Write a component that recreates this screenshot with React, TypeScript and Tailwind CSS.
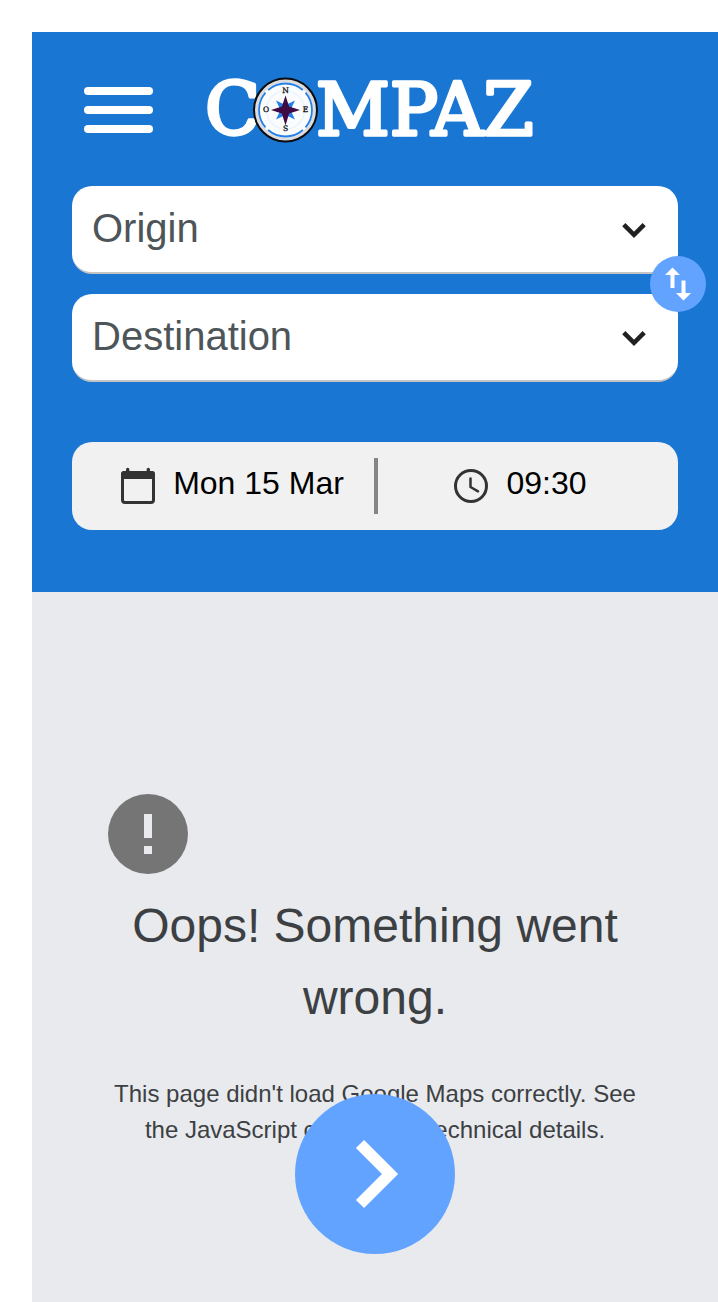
import React from "react";

type FieldProps = { id: string; label: string; options: string[] };

function PlaceField({ id, label, options }: FieldProps) {
  return (
    <div className="grid items-center">
      <select
        id={id}
        aria-label={label}
        defaultValue=""
        className="col-start-1 row-start-1 h-[88px] w-full appearance-none rounded-[20px] border-b-2 border-[#c4c4c4] bg-white pr-20 pb-0.5 pl-5 text-[40px] text-[#4d5559]"
      >
        <option value="">{label}</option>
        {options.map((o) => (
          <option key={o}>{o}</option>
        ))}
      </select>
      <svg
        viewBox="0 0 24 16"
        className="pointer-events-none col-start-1 row-start-1 mr-8 h-4 w-6 justify-self-end"
        fill="none"
        stroke="#212121"
        strokeWidth="4.500"
        aria-hidden="true"
      >
        <path d="M1.800 2.600L12 12.800L22.200 2.600" />
      </svg>
    </div>
  );
}

function Logo() {
  return (
    <svg viewBox="0 -16 342 100" className="h-[100px] w-[342px] shrink-0" role="img" aria-label="Compaz">
      <g
        fill="#fff"
        stroke="#fff"
        strokeWidth="3.500"
        strokeLinejoin="round"
        fontFamily="'DejaVu Serif', serif"
        fontSize="72"
      >
        <text x="1" y="59">C</text>
        <text x="112" y="59">MPAZ</text>
      </g>
      <g transform="translate(48.500 1)">
        <circle cx="33" cy="33" r="31.500" fill="#dcdcde" stroke="#0b0b10" strokeWidth="2" />
        <circle cx="33" cy="33" r="27.500" fill="#fbfcfe" />
        <circle
          cx="33"
          cy="33"
          r="26.500"
          fill="none"
          stroke="#2480e6"
          strokeWidth="1.800"
          pathLength="360"
          strokeDasharray="82 8"
          strokeDashoffset="-49"
        />
        <circle cx="33" cy="33" r="19" fill="none" stroke="#eaf4fc" strokeWidth="1.500" />
        <path
          d="M23.500 23.500L33 28L42.500 23.500L38 33L42.500 42.500L33 38L23.500 42.500L28 33Z"
          fill="#2480e6"
        />
        <path
          d="M33 18.500L36.600 29.400L47.500 33L36.600 36.600L33 48.500L29.400 36.600L18.500 33L29.400 29.400Z"
          fill="#400b42"
        />
        <g fill="#111" fontFamily="'DejaVu Serif', serif" fontSize="7.500" textAnchor="middle" stroke="#111" strokeWidth=".3">
          <text x="33" y="16">N</text>
          <text x="53" y="34.500">E</text>
          <text x="33" y="53.500">S</text>
          <text x="13.500" y="34.500">O</text>
        </g>
      </g>
    </svg>
  );
}

export default function App() {
  return (
    <div className="flex min-h-screen flex-col bg-white pt-8 pl-8 font-['Liberation_Sans',Arial,sans-serif]">
      <header className="bg-[#1976d2] px-10 pt-11 pb-[62px]">
        <div className="flex h-[68px] items-center pl-3">
          <button type="button" aria-label="Menu" className="flex w-[69px] flex-col gap-[11px]">
            <span className="h-2 rounded-full bg-white" />
            <span className="h-2 rounded-full bg-white" />
            <span className="h-2 rounded-full bg-white" />
          </button>
          <a href="#" aria-label="Compaz" className="ml-[51px]">
            <Logo />
          </a>
        </div>

        <form className="mt-[42px]" onSubmit={(e) => e.preventDefault()}>
          <div className="relative flex flex-col gap-5">
            <PlaceField id="origin" label="Origin" options={["Home", "Work"]} />
            <PlaceField id="destination" label="Destination" options={["Home", "Work"]} />
            <button
              type="button"
              aria-label="Swap origin and destination"
              className="absolute top-1/2 -right-7 flex size-14 -translate-y-1/2 items-center justify-center rounded-full bg-[#62a3ff]"
            >
              <svg viewBox="0 0 56 56" className="size-14" fill="#fff" aria-hidden="true">
                <path d="M22.500 11.500L30 19H24.500V32H20.500V19H15ZM31.500 24.500H35.500V37H41L33.500 44.500L26 37H31.500Z" />
              </svg>
            </button>
          </div>

          <div className="mt-[60px] flex h-[88px] items-center rounded-[20px] bg-[#f1f1f1] text-[32px] text-black">
            <button type="button" className="flex flex-1 items-center justify-center gap-[17px] pl-[18px]">
              <svg viewBox="0 0 36 38" className="h-[38px] w-9 shrink-0" aria-hidden="true">
                <rect x="2.500" y="5.500" width="31" height="30" rx="2.500" fill="none" stroke="#333" strokeWidth="3" />
                <path d="M1 12V7Q1 4 4 4H6V2.500Q6 .8 7.700 .8T9.400 2.500V4H26.600V2.500Q26.600 .8 28.300 .8T30 2.500V4H32Q35 4 35 7V12Z" fill="#333" />
              </svg>
              <span className="pb-1.5 whitespace-nowrap">Mon 15 Mar</span>
            </button>
            <span className="h-14 w-1 bg-[#858585]" />
            <button type="button" className="flex flex-1 items-center justify-center gap-[17px] pr-4">
              <svg
                viewBox="0 0 36 36"
                className="size-9 shrink-0"
                fill="none"
                stroke="#333"
                strokeLinecap="round"
                strokeLinejoin="round"
                aria-hidden="true"
              >
                <circle cx="18" cy="18" r="15.500" strokeWidth="3" />
                <path d="M17.500 10.500V19L25 23.300" strokeWidth="2.500" />
              </svg>
              <span className="pb-1.5">09:30</span>
            </button>
          </div>
        </form>
      </header>

      <main className="relative flex-1 bg-[#e8eaed] px-[76px] pt-[202px] pb-36 text-center text-[#3c4043]">
        <svg viewBox="0 0 80 80" className="size-20" role="img" aria-label="Error">
          <circle cx="40" cy="40" r="40" fill="#757575" />
          <path d="M36 20H44V44H36ZM36 52H44V60H36Z" fill="#e8eaed" />
        </svg>
        <h1 className="mt-4 text-5xl leading-[72px]">Oops! Something went wrong.</h1>
        <p className="mt-[42px] text-2xl leading-9">
          This page didn't load Google Maps correctly. See the JavaScript console for technical
          details.
        </p>
        <button
          type="button"
          aria-label="Next"
          className="absolute bottom-12 left-1/2 flex size-40 -translate-x-1/2 items-center justify-center rounded-full bg-[#62a3ff]"
        >
          <svg viewBox="0 0 160 160" className="size-40" fill="none" stroke="#fff" strokeWidth="11.500" aria-hidden="true">
            <path d="M65 50L95 80L65 110" />
          </svg>
        </button>
      </main>
    </div>
  );
}
